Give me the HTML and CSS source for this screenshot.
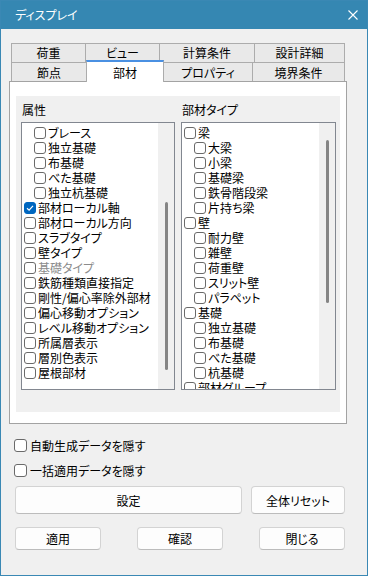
FILE: index.html
```html
<!doctype html>
<html>
  <head>
    <meta charset="utf-8">
    <title>ディスプレイ</title>
    <link rel="stylesheet" href="styles.css">
  </head>
  <body>
    <div class="window">
      <div class="titlebar">
        <span class="title">ディスプレイ</span>
        <svg class="close" width="10" height="10" viewBox="0 0 10 10"><path d="M0.5 0.5 L9.5 9.5 M9.5 0.5 L0.5 9.5" stroke="#fff" stroke-width="1.1" fill="none"/></svg>
      </div>
      <div class="content">
        <div class="tabs">
          <div class="tab-row">
            <div class="tab w75">荷重</div>
            <div class="tab w75">ビュー</div>
            <div class="tab w96">計算条件</div>
            <div class="tab w91">設計詳細</div>
          </div>
          <div class="tab-row row2">
            <div class="tab w76">節点</div>
            <div class="tab w78 selected">部材</div>
            <div class="tab w90">プロパティ</div>
            <div class="tab w93">境界条件</div>
          </div>
        </div>
        <div class="panel">
          <div class="group">
            <div class="col">
              <div class="label">属性</div>
              <div class="listbox left">
                <ul class="items">
                  <li class="sub"><span class="cb"></span>ブレース</li>
                  <li class="sub"><span class="cb"></span>独立基礎</li>
                  <li class="sub"><span class="cb"></span>布基礎</li>
                  <li class="sub"><span class="cb"></span>べた基礎</li>
                  <li class="sub"><span class="cb"></span>独立杭基礎</li>
                  <li><span class="cb checked"><svg width="10" height="10" viewBox="0 0 10 10"><path d="M2 5.2 L4.1 7.2 L8 2.8" stroke="#fff" stroke-width="1.2" fill="none"/></svg></span>部材ローカル軸</li>
                  <li><span class="cb"></span>部材ローカル方向</li>
                  <li><span class="cb"></span>スラブタイプ</li>
                  <li><span class="cb"></span>壁タイプ</li>
                  <li class="disabled"><span class="cb"></span>基礎タイプ</li>
                  <li><span class="cb"></span>鉄筋種類直接指定</li>
                  <li><span class="cb"></span>剛性/偏心率除外部材</li>
                  <li><span class="cb"></span>偏心移動オプション</li>
                  <li><span class="cb"></span>レベル移動オプション</li>
                  <li><span class="cb"></span>所属層表示</li>
                  <li><span class="cb"></span>層別色表示</li>
                  <li><span class="cb"></span>屋根部材</li>
                </ul>
                <div class="track"><div class="thumb" style="margin-top: 79px; height: 168px"></div></div>
              </div>
            </div>
            <div class="col">
              <div class="label">部材タイプ</div>
              <div class="listbox right">
                <ul class="items">
                  <li><span class="cb"></span>梁</li>
                  <li class="sub"><span class="cb"></span>大梁</li>
                  <li class="sub"><span class="cb"></span>小梁</li>
                  <li class="sub"><span class="cb"></span>基礎梁</li>
                  <li class="sub"><span class="cb"></span>鉄骨階段梁</li>
                  <li class="sub"><span class="cb"></span>片持ち梁</li>
                  <li><span class="cb"></span>壁</li>
                  <li class="sub"><span class="cb"></span>耐力壁</li>
                  <li class="sub"><span class="cb"></span>雑壁</li>
                  <li class="sub"><span class="cb"></span>荷重壁</li>
                  <li class="sub"><span class="cb"></span>スリット壁</li>
                  <li class="sub"><span class="cb"></span>パラペット</li>
                  <li><span class="cb"></span>基礎</li>
                  <li class="sub"><span class="cb"></span>独立基礎</li>
                  <li class="sub"><span class="cb"></span>布基礎</li>
                  <li class="sub"><span class="cb"></span>べた基礎</li>
                  <li class="sub"><span class="cb"></span>杭基礎</li>
                  <li><span class="cb"></span>部材グループ</li>
                </ul>
                <div class="track"><div class="thumb" style="margin-top: 17px; height: 163px"></div></div>
              </div>
            </div>
          </div>
        </div>
        <div class="opt first"><span class="cb big"></span>自動生成データを隠す</div>
        <div class="opt"><span class="cb big"></span>一括適用データを隠す</div>
        <div class="btn-row main">
          <button class="btn set">設定</button>
          <button class="btn reset">全体リセット</button>
        </div>
        <div class="btn-row bottom">
          <button class="btn small">適用</button>
          <button class="btn small">確認</button>
          <button class="btn small">閉じる</button>
        </div>
      </div>
    </div>
  </body>
</html>
```

FILE: styles.css
```css
* { box-sizing: border-box; }
body { margin: 0; font-family: "Noto Sans CJK JP", "Noto Sans", sans-serif; font-size: 12px; font-feature-settings: "palt"; color: #000; }

.window { width: 368px; height: 576px; border: 1px solid #3a88b4; background: #f0f0f0; }
.titlebar { height: 28px; background: #3587b2; color: #fff; display: flex; align-items: center; justify-content: space-between; padding: 0 9px 0 14px; }
.title { font-size: 12px; line-height: 14px; }

.content { padding: 14px 8px 0; }

/* tabs */
.tabs { margin-left: 2px; }
.tab-row { display: flex; }
.tab { height: 20px; border: 1px solid #acacac; background: #e9e9e9; text-align: center; line-height: 18px; margin-left: -1px; white-space: nowrap; }
.tab:first-child { margin-left: 0; }
.row2 { margin-top: -1px; align-items: flex-end; }
.row2 .tab { height: 19px; border-bottom: none; line-height: 18px; padding-top: 1px; }
.row2 .tab.selected { height: 22px; margin-top: -2px; margin-bottom: -1px; background: #fff; border-top: 2px solid #4a90e2; padding-top: 2px; position: relative; z-index: 1; }
.w75 { width: 75px; } .w96 { width: 96px; } .w91 { width: 91px; }
.w76 { width: 76px; } .w78 { width: 78px; } .w90 { width: 90px; } .w93 { width: 93px; }

/* panel */
.panel { width: 338px; height: 343px; border: 1px solid #a3a3a3; background: #fff; padding: 14px 0 0 6px; }
.group { width: 324px; height: 316px; background: #f0f0f0; padding: 6px 5px 0; display: grid; grid-template-columns: 154px 155px; column-gap: 6px; }
.label { line-height: 15px; height: 15px; margin-bottom: 5px; padding-left: 1px; }
.listbox { height: 268px; border: 1px solid #828790; background: #fff; display: flex; overflow: hidden; }
.items { flex: 1; list-style: none; margin: 0; padding: 2px 0 0; overflow: hidden; }
.items li { height: 15px; display: flex; align-items: center; white-space: nowrap; padding-left: 2px; line-height: 15px; }
.items li.sub { padding-left: 12px; }
.items li.disabled { color: #8c8c8c; }
.track { width: 16px; background: #f0f0f0; flex: none; }
.thumb { width: 3px; margin-left: 7px; background: #858585; border-radius: 2px; }

/* checkboxes */
.cb { width: 12px; height: 12px; border: 1px solid #6a6a6a; border-radius: 3px; background: #fff; margin-right: 2px; flex: none; display: flex; align-items: center; justify-content: center; }
.cb.checked { background: #0067c0; border-color: #0067c0; }
.cb.big { width: 13px; height: 13px; margin-right: 3px; }

.opt { display: flex; align-items: center; height: 25px; margin-left: 5px; }
.opt.first { margin-top: 9px; }

/* buttons */
.btn { font: inherit; font-feature-settings: "palt"; color: #000; background: #fdfdfd; border: 1px solid #d3d3d3; border-bottom-color: #bcbcbc; border-radius: 4px; padding: 0; }
.btn-row { display: flex; margin-left: 6px; }
.btn-row.main { margin-top: 3px; gap: 9px; }
.btn-row.main .btn { height: 28px; }
.btn.set { width: 227px; }
.btn.reset { width: 94px; }
.btn-row.bottom { margin-top: 13px; width: 330px; justify-content: space-between; }
.btn.small { width: 86px; height: 23px; }
```
